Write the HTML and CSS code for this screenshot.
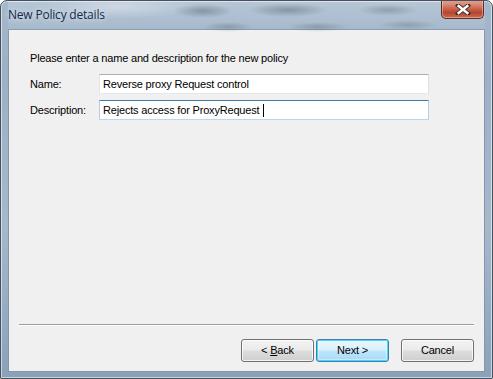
FILE: index.html
```html
<!DOCTYPE html>
<html>
<head>
<meta charset="utf-8">
<link rel="stylesheet" href="styles.css">
</head>
<body>
<div class="window">
  <div class="titlebar">
    <div class="glass"></div>
    <span class="title">New Policy details</span>
    <div class="close">
      <svg width="16" height="11" viewBox="0 0 16 11">
        <path d="M3 1.5 L13 9.5 M13 1.5 L3 9.5" stroke="#3b2a2a" stroke-width="4.2" stroke-linecap="square"/>
        <path d="M3.6 2 L12.4 9 M12.4 2 L3.6 9" stroke="#ffffff" stroke-width="2.4" stroke-linecap="square"/>
      </svg>
    </div>
  </div>
  <div class="content">
    <div class="form">
      <p class="intro">Please enter a name and description for the new policy</p>
      <div class="row">
        <label class="label">Name:</label>
        <div class="field">Reverse proxy Request control</div>
      </div>
      <div class="row">
        <label class="label">Description:</label>
        <div class="field focused">Rejects access for ProxyRequest <span class="caret"></span></div>
      </div>
    </div>
    <div class="footer">
      <div class="separator"></div>
      <div class="buttons">
        <button class="btn">&lt; <u>B</u>ack</button>
        <button class="btn default">Next &gt;</button>
        <button class="btn cancel">Cancel</button>
      </div>
    </div>
  </div>
</div>
</body>
</html>
```
FILE: styles.css
```css
html, body {
  margin: 0;
  padding: 0;
  background: #ffffff;
}
.window {
  position: relative;
  width: 493px;
  height: 379px;
  box-sizing: border-box;
  border: 1px solid #45515e;
  border-radius: 7px 7px 1px 1px;
  padding: 0 7px 6px 7px;
  display: flex;
  flex-direction: column;
  overflow: hidden;
  background: linear-gradient(180deg, #a4b8cc 0%, #9cb1c6 20%, #a5b9cd 60%, #8aa1b8 100%);
  box-shadow: inset 0 0 0 1px rgba(255,255,255,0.55);
}
.glass {
  position: absolute;
  left: 0; top: 0; right: 0; height: 40px;
  background:
    radial-gradient(ellipse 30px 7px at 195px 10px, rgba(80,95,110,0.45), transparent),
    radial-gradient(ellipse 40px 7px at 280px 9px, rgba(80,95,110,0.45), transparent),
    radial-gradient(ellipse 30px 6px at 380px 9px, rgba(80,95,110,0.35), transparent),
    radial-gradient(ellipse 25px 5px at 220px 26px, rgba(80,95,110,0.35), transparent),
    radial-gradient(ellipse 30px 5px at 310px 26px, rgba(80,95,110,0.35), transparent),
    radial-gradient(ellipse 30px 5px at 400px 24px, rgba(80,95,110,0.3), transparent),
    radial-gradient(ellipse 80px 12px at 110px 6px, rgba(255,255,255,0.35), transparent),
    linear-gradient(180deg, rgba(255,255,255,0.2), rgba(255,255,255,0));
  pointer-events: none;
}
.titlebar {
  position: relative;
  height: 28px;
  flex: none;
}
.title {
  position: relative;
  display: block;
  padding-top: 7px;
  font-family: "Open Sans", "Noto Sans", sans-serif;
  font-size: 12px;
  line-height: 14px;
  color: #15294a;
  letter-spacing: -0.2px;
  text-shadow: 0 0 6px rgba(255,255,255,0.9);
}
.close {
  position: absolute;
  right: 1px;
  top: -1px;
  width: 43px;
  height: 19px;
  box-sizing: border-box;
  border: 1px solid #5d2c22;
  border-top: none;
  border-radius: 0 0 5px 5px;
  background: linear-gradient(180deg, #e6a38f 0%, #d88a73 25%, #c9604a 50%, #b4462f 70%, #cf6a4c 100%);
  box-shadow: inset 0 0 0 1px rgba(255,220,200,0.45);
  display: flex;
  align-items: center;
  justify-content: center;
}
.content {
  flex: 1;
  display: flex;
  flex-direction: column;
  background: #f0f0f0;
  border: 1px solid #8596a8;
  font-family: "Liberation Sans", Arial, sans-serif;
  font-size: 11px;
  letter-spacing: -0.18px;
  color: #000;
}
.form {
  flex: 1;
  padding: 22px 0 0 21px;
}
.intro {
  margin: 0 0 9px 0;
  line-height: 13px;
}
.row {
  display: flex;
  align-items: center;
  margin-bottom: 6px;
}
.label {
  width: 69px;
  line-height: 13px;
}
.field {
  width: 330px;
  height: 20px;
  box-sizing: border-box;
  border: 1px solid #ababab;
  border-top-color: #abadb3;
  border-left-color: #e2e3ea;
  border-right-color: #dbdfe6;
  border-bottom-color: #e3e9ef;
  background: #ffffff;
  padding: 2px 3px;
  line-height: 14px;
  white-space: nowrap;
  display: flex;
  align-items: center;
}
.field.focused {
  border-color: #3d7bad;
  border-left-color: #b5cfe7;
  border-right-color: #b5cfe7;
  border-bottom-color: #b7d9ed;
}
.caret {
  display: inline-block;
  width: 1px;
  height: 13px;
  background: #000;
  margin-left: 4px;
}
.footer {
  padding: 0 10px 9px 10px;
}
.separator {
  height: 1px;
  background: #a0a0a0;
  border-bottom: 1px solid #ffffff;
  margin-bottom: 13px;
}
.buttons {
  display: flex;
  justify-content: flex-end;
}
.btn {
  width: 73px;
  height: 23px;
  box-sizing: border-box;
  margin: 0 0 0 2px;
  padding: 0;
  border: 1px solid #707070;
  border-radius: 3px;
  background: linear-gradient(180deg, #f2f2f2 0%, #ebebeb 48%, #dddddd 52%, #cfcfcf 100%);
  box-shadow: inset 0 0 0 1px rgba(255,255,255,0.75);
  font-family: "Liberation Sans", Arial, sans-serif;
  font-size: 11px;
  letter-spacing: -0.18px;
  color: #000;
  line-height: 13px;
}
.btn u {
  text-decoration: underline;
}
.btn.default {
  border-color: #3c7fb1;
  background: linear-gradient(180deg, #eaf6fd 0%, #d9f0fc 48%, #bee6fd 52%, #a7d9f5 100%);
  box-shadow: inset 0 0 0 1px #48d6fa, inset 0 0 0 2px rgba(255,255,255,0.4);
}
.btn.cancel {
  margin-left: 12px;
}
```
